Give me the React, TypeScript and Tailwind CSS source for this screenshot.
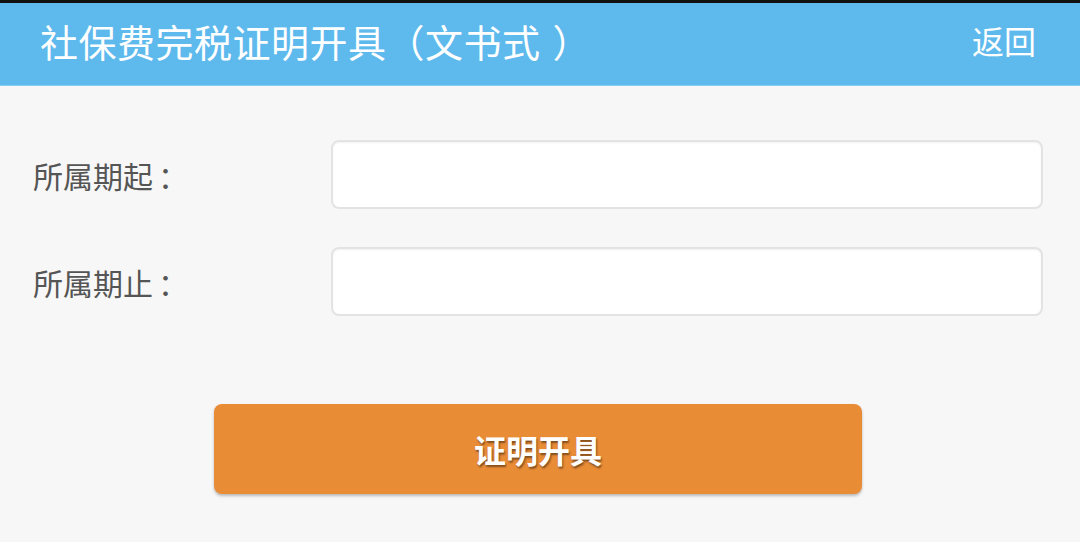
export default function App() {
  const rows = ["所属期起", "所属期止"];

  return (
    <div
      className="w-[1080px] h-[542px] overflow-hidden bg-[#f7f7f7] flex flex-col"
      style={{ fontFamily: '"Noto Sans CJK SC", "Noto Sans", sans-serif' }}
    >
      {/* top strip */}
      <div className="h-[3px] bg-[#111]" />

      {/* header */}
      <div className="h-[83px] bg-[#5eb9ed] flex items-center justify-between pl-[40px] pr-[44px] border-b border-[#8ccbf0]">
        <h1 className="text-[38px] leading-none text-white -mt-[6px] tracking-[0.5px]">
          社保费完税证明开具（文书式<span className="ml-[12px]">）</span>
        </h1>
        <button className="text-[32px] leading-none text-white -mt-[8px]">返回</button>
      </div>

      {/* form */}
      <div className="flex flex-col gap-[38px] pt-[54px] pl-[33px] pr-[37px]">
        {rows.map((label) => (
          <div key={label} className="flex items-center">
            <label className="w-[298px] text-[30px] leading-none text-[#555]">
              {label}
              <span className="ml-[5px]">：</span>
            </label>
            <input
              type="text"
              className="flex-1 h-[69px] bg-white rounded-[8px] border-2 border-[#e3e3e3] shadow-[inset_0_1px_2px_rgba(0,0,0,0.06)] outline-none"
            />
          </div>
        ))}
      </div>

      <div className="flex justify-center pt-[88px]">
        <button className="w-[648px] h-[90px] -ml-[4px] rounded-[8px] bg-[#e98c36] shadow-[0_2px_3px_rgba(0,0,0,0.25)] text-white text-[32px] font-bold [text-shadow:1px_2px_2px_rgba(0,0,0,0.45)]">
          证明开具
        </button>
      </div>
    </div>
  );
}
